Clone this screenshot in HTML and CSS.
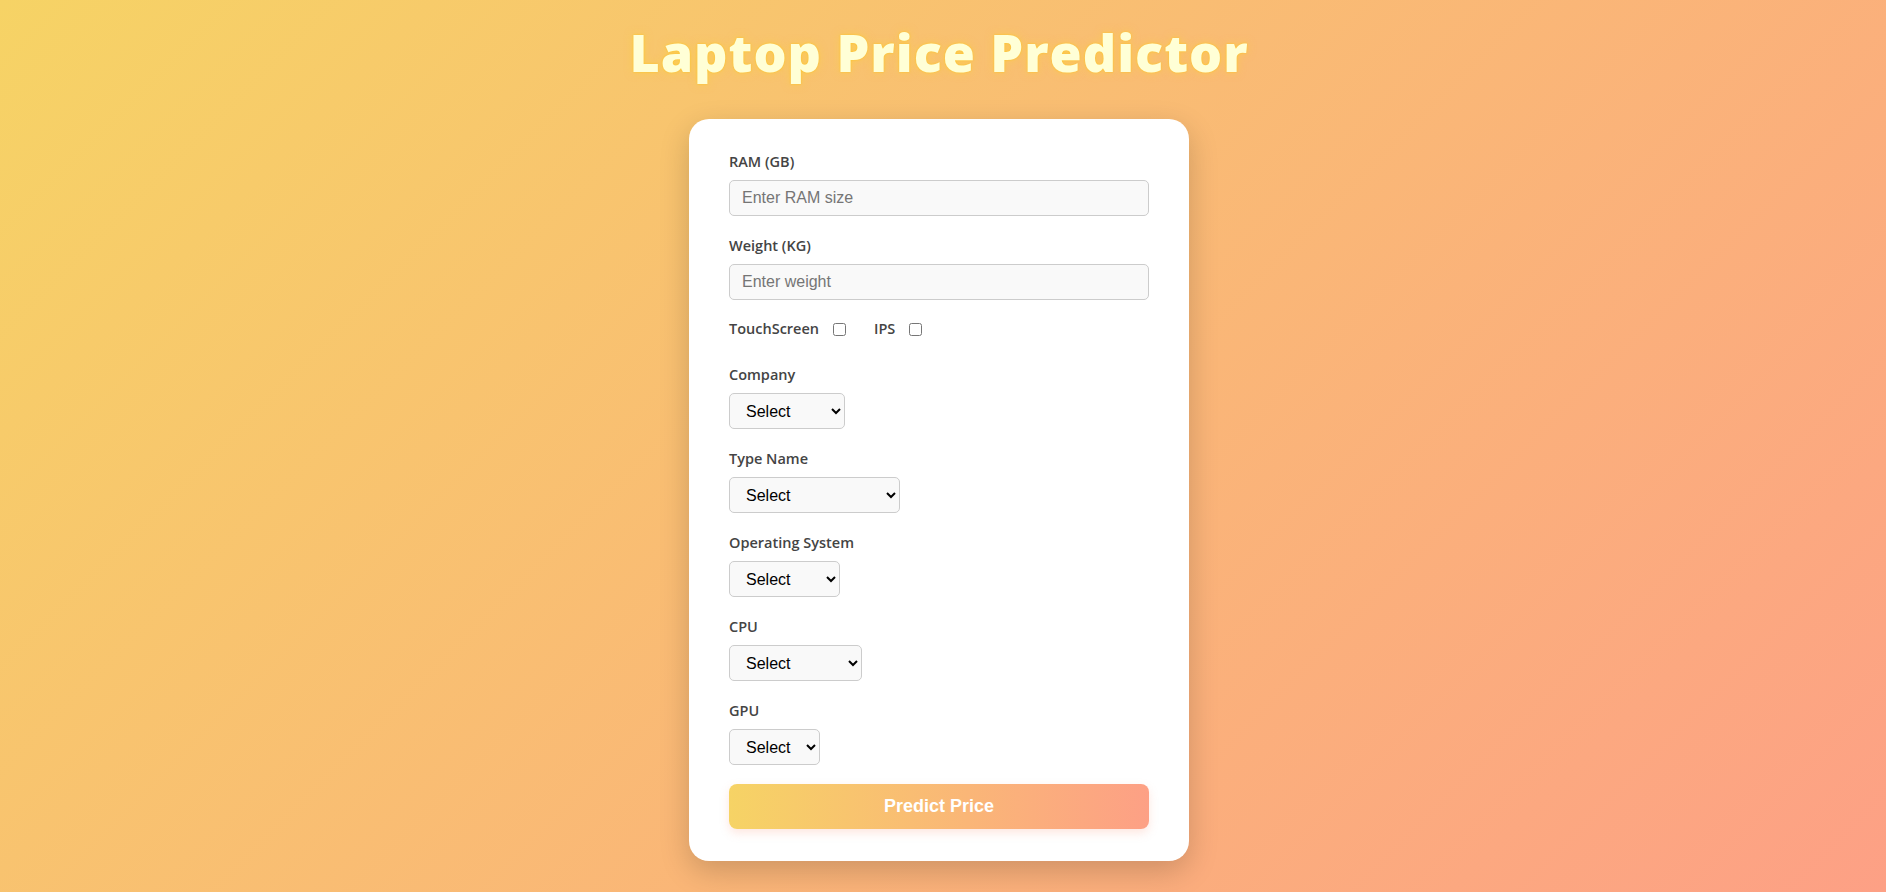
FILE: index.html
```html
<!DOCTYPE html>
<html lang="en">
<head>
<meta charset="utf-8">
<title>Laptop Price Predictor</title>
<link rel="stylesheet" href="styles.css">
</head>
<body>
<div class="page">
  <h1 class="title">Laptop Price Predictor</h1>
  <form class="card">
    <div class="field">
      <label class="label">RAM (GB)</label>
      <input class="text-input" type="number" placeholder="Enter RAM size">
    </div>
    <div class="field">
      <label class="label">Weight (KG)</label>
      <input class="text-input" type="number" placeholder="Enter weight">
    </div>
    <div class="check-row">
      <label class="check"><span class="label">TouchScreen</span><input type="checkbox" class="box"></label>
      <label class="check"><span class="label">IPS</span><input type="checkbox" class="box"></label>
    </div>
    <div class="field">
      <label class="label">Company</label>
      <select class="select w-company"><option>Select</option></select>
    </div>
    <div class="field">
      <label class="label">Type Name</label>
      <select class="select w-type"><option>Select</option></select>
    </div>
    <div class="field">
      <label class="label">Operating System</label>
      <select class="select w-os"><option>Select</option></select>
    </div>
    <div class="field">
      <label class="label">CPU</label>
      <select class="select w-cpu"><option>Select</option></select>
    </div>
    <div class="field">
      <label class="label">GPU</label>
      <select class="select w-gpu"><option>Select</option></select>
    </div>
    <button type="button" class="predict">Predict Price</button>
  </form>
</div>
</body>
</html>
```
FILE: styles.css
```css
* { box-sizing: border-box; }
html, body { margin: 0; padding: 0; }
body {
  min-height: 100vh;
  background: linear-gradient(135deg, #f6d365 0%, #fda085 100%);
  font-family: "Open Sans", "Liberation Sans", sans-serif;
}
.page {
  display: flex;
  flex-direction: column;
  align-items: center;
  padding-top: 21px;
  padding-right: 8px;
  padding-bottom: 31px;
}
.title {
  margin: 0 0 36px;
  font-family: "Open Sans", sans-serif;
  font-weight: 800;
  font-size: 52px;
  line-height: 1.2;
  letter-spacing: 1px;
  color: #ffffd6;
  text-shadow: 0 0 2px #ffc21a, 0 0 8px rgba(255, 210, 60, 0.55);
}
.card {
  width: 500px;
  background: #fff;
  border-radius: 20px;
  padding: 33px 40px 32px;
  box-shadow: 0 10px 30px rgba(0, 0, 0, 0.18);
  display: flex;
  flex-direction: column;
  align-items: flex-start;
}
.field {
  display: flex;
  flex-direction: column;
  align-items: flex-start;
  width: 100%;
  margin-bottom: 20px;
}
.label {
  display: block;
  font-family: "Open Sans", sans-serif;
  font-weight: 600;
  font-size: 14.5px;
  line-height: 20px;
  color: #444;
  margin-bottom: 8px;
}
.check .label { margin-bottom: 0; }
.text-input {
  width: 100%;
  height: 36px;
  padding: 8px 12px;
  border: 1px solid #ccc;
  border-radius: 5px;
  background: #f9f9f9;
  font-family: "Liberation Sans", Arial, sans-serif;
  font-size: 16px;
  color: #222;
}
.text-input::placeholder { color: #757575; }
.check-row {
  display: flex;
  align-items: center;
  gap: 28px;
  margin-top: -1px;
  margin-bottom: 26px;
}
.check {
  display: flex;
  align-items: center;
}
.box {
  width: 13px;
  height: 13px;
  margin: 0 0 0 14px;
}
.select {
  height: 36px;
  padding: 0 8px 0 12px;
  border: 1px solid #ccc;
  border-radius: 5px;
  background: #f9f9f9;
  font-family: "Liberation Sans", Arial, sans-serif;
  font-size: 16px;
  color: #000;
}
.w-company { width: 116px; }
.w-type { width: 171px; }
.w-os { width: 111px; }
.w-cpu { width: 133px; }
.w-gpu { width: 91px; }
.predict {
  width: 100%;
  height: 45px;
  margin-top: -1px;
  border: none;
  border-radius: 8px;
  background: linear-gradient(90deg, #f6d365 0%, #fda085 100%);
  color: #fff;
  font-family: "Liberation Sans", Arial, sans-serif;
  font-weight: 700;
  font-size: 18px;
  box-shadow: 0 4px 10px rgba(253, 160, 133, 0.25);
  cursor: pointer;
}
```
